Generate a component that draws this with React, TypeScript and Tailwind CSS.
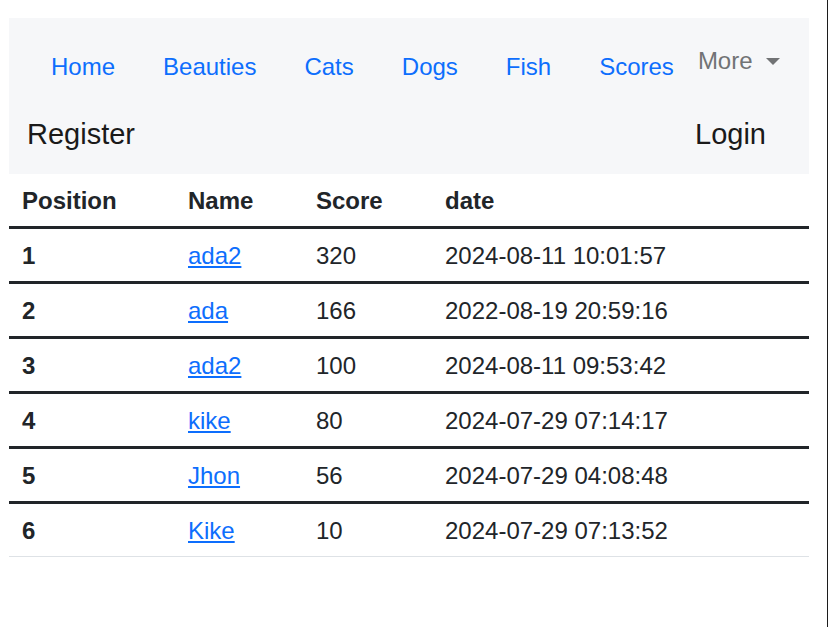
const links = ['Home', 'Beauties', 'Cats', 'Dogs', 'Fish', 'Scores'];

const scores = [
  { pos: 1, name: 'ada2', score: 320, date: '2024-08-11 10:01:57' },
  { pos: 2, name: 'ada', score: 166, date: '2022-08-19 20:59:16' },
  { pos: 3, name: 'ada2', score: 100, date: '2024-08-11 09:53:42' },
  { pos: 4, name: 'kike', score: 80, date: '2024-07-29 07:14:17' },
  { pos: 5, name: 'Jhon', score: 56, date: '2024-07-29 04:08:48' },
  { pos: 6, name: 'Kike', score: 10, date: '2024-07-29 07:13:52' },
];

const App = () => {
  return (
    <div className="w-full min-h-screen bg-white border-r border-[#1c1c1c] font-['Liberation_Sans',Arial,sans-serif] text-[#212529]">
      <div className="ml-[9px] w-[800px] pt-[18px]">
        {/* Navbar */}
        <nav className="bg-[#f6f7f9] px-[18px] pt-[19px] pb-[18px]">
          <div className="flex items-start h-[60px]">
            {links.map((l) => (
              <a key={l} href="#" className="px-6 py-3 text-2xl leading-[36px] text-[#0d6efd]">
                {l}
              </a>
            ))}
            <a href="#" className="flex items-center pt-[6px] text-2xl leading-[36px] text-[#717375]">
              More
              <svg width="14" height="7" viewBox="0 0 14 7" className="ml-[13px]">
                <polygon points="0,0 14,0 7,7" fill="#717375" />
              </svg>
            </a>
          </div>
          <div className="flex items-center justify-between h-[44px] mt-[15px]">
            <a href="#" className="text-[29px] leading-[44px] text-[#1a1a1a]">Register</a>
            <a href="#" className="pl-6 pr-[25px] text-[29px] leading-[44px] text-[#1a1a1a]">Login</a>
          </div>
        </nav>

        {/* Scores table */}
        <table className="w-full border-separate border-spacing-0 text-2xl leading-[36px] text-left">
          <thead>
            <tr>
              <th className="w-[167px] px-[13px] pt-[9px] pb-[7px] font-bold">Position</th>
              <th className="w-[128px] px-[12px] pt-[9px] pb-[7px] font-bold">Name</th>
              <th className="w-[129px] px-[12px] pt-[9px] pb-[7px] font-bold">Score</th>
              <th className="px-[12px] pt-[9px] pb-[7px] font-bold">date</th>
            </tr>
          </thead>
          <tbody>
            {scores.map((s, i) => {
              const last = i === scores.length - 1;
              const cell = `px-[12px] pt-[9px] pb-[7px] border-t-[3px] border-[#212529] ${last ? 'border-b border-b-[#dee2e6]' : ''}`;
              return (
                <tr key={s.pos}>
                  <td className={`${cell} pl-[13px] font-bold`}>{s.pos}</td>
                  <td className={cell}>
                    <a href="#" className="text-[#0d6efd] underline">{s.name}</a>
                  </td>
                  <td className={cell}>{s.score}</td>
                  <td className={cell}>{s.date}</td>
                </tr>
              );
            })}
          </tbody>
        </table>
      </div>
    </div>
  );
};

export default App;
